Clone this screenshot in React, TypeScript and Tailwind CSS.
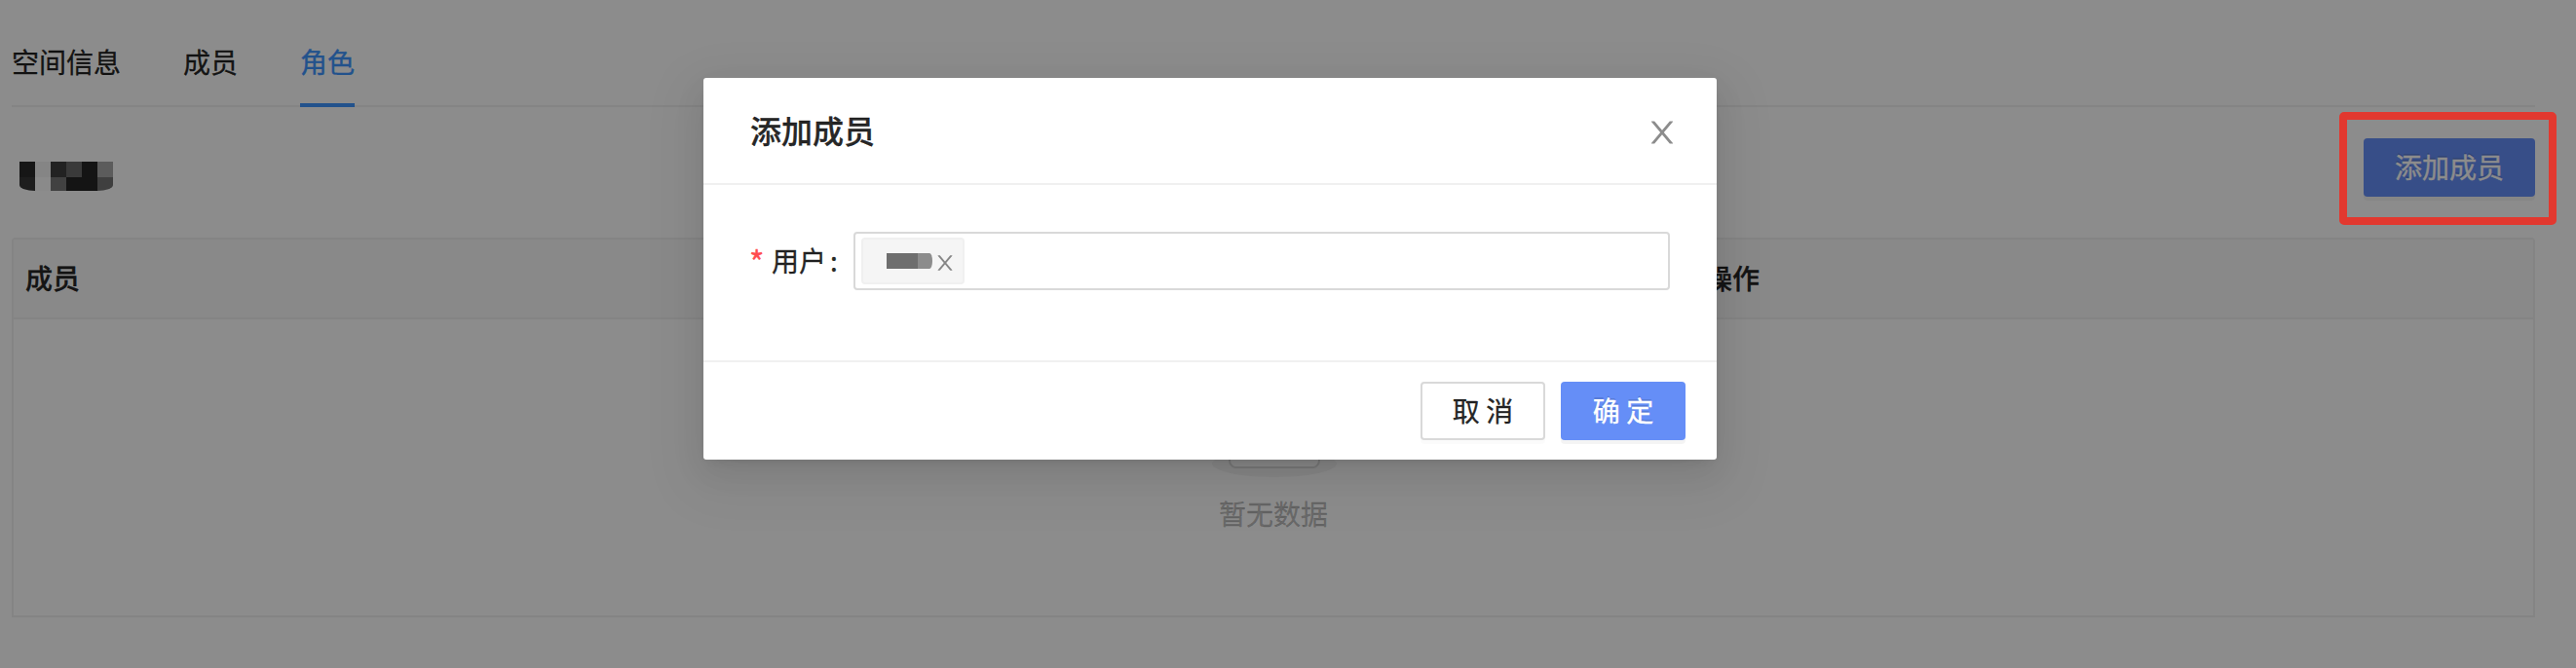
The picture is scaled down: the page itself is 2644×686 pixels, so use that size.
import React from "react";

function CloseIcon({ className }: { className: string }) {
  return (
    <svg viewBox="0 0 1024 1024" fill="currentColor" className={className} aria-hidden="true">
      <path d="M563.8 512l262.5-312.9c4.4-5.2.7-13.1-6.1-13.1h-79.8c-4.7 0-9.2 2.1-12.3 5.7L511.6 449.8 295.1 191.7c-3-3.6-7.5-5.7-12.3-5.7H203c-6.8 0-10.5 7.9-6.1 13.1L459.4 512 196.9 824.9A7.95 7.95 0 00203 838h79.8c4.7 0 9.2-2.1 12.3-5.7l216.5-258.1 216.5 258.1c3 3.6 7.5 5.7 12.3 5.7h79.8c6.8 0 10.5-7.9 6.1-13.1L563.8 512z" />
    </svg>
  );
}

function EmptyIcon() {
  return (
    <svg width="128" height="82" viewBox="0 0 64 41" className="block" aria-hidden="true">
      <g transform="translate(0 1)" fill="none" fillRule="evenodd">
        <ellipse fill="#F5F5F5" cx="32" cy="33" rx="32" ry="7" />
        <g fillRule="nonzero" stroke="#D9D9D9">
          <path d="M55 12.76L44.854 1.258C44.367.474 43.656 0 42.907 0H21.093c-.749 0-1.46.474-1.947 1.257L9 12.761V22h46v-9.24z" />
          <path
            d="M41.613 15.931c0-1.605.994-2.93 2.227-2.931H55v18.137C55 33.26 53.68 35 52.05 35h-40.1C10.32 35 9 33.259 9 31.137V13h11.16c1.233 0 2.227 1.323 2.227 2.928v.022c0 1.605 1.005 2.901 2.237 2.901h14.752c1.232 0 2.237-1.308 2.237-2.913v-.007z"
            fill="#FAFAFA"
          />
        </g>
      </g>
    </svg>
  );
}

function RedactedName() {
  return (
    <div className="mt-px grid h-[30px] w-24 grid-cols-6 grid-rows-[16px_14px]">
      <i className="bg-[#282828]" />
      <i className="bg-[#f2f2f2]" />
      <i className="bg-[#3e3e3e]" />
      <i className="bg-[#6a6a6a]" />
      <i className="bg-[#262626]" />
      <i className="bg-[#a8a8a8]" />
      <i className="bg-[#363636] [border-bottom-left-radius:16px_6px]" />
      <i className="bg-[#fbfbfb]" />
      <i className="bg-[#777777]" />
      <i className="bg-[#262626]" />
      <i className="bg-[#262626]" />
      <i className="bg-[#747474] [border-bottom-right-radius:16px_6px]" />
    </div>
  );
}

function MembersPage() {
  return (
    <div className="flex h-[686px] flex-col pl-3 pr-[42px]">
      <nav className="flex h-[110px] gap-16 border-b-2 border-[#f0f0f0] text-[28px] leading-[44px]">
        <span className="pt-[41px]">空间信息</span>
        <span className="pt-[41px]">成员</span>
        <span className="-mb-0.5 border-b-4 border-[#3e96ff] pt-[41px] text-[#3e96ff]">角色</span>
      </nav>
      <div className="flex h-[134px] items-start justify-between pt-8">
        <div className="pl-2 pt-[23px]">
          <RedactedName />
        </div>
        <button className="h-[60px] w-44 rounded-[4px] bg-[#658ef7] pb-0.5 text-[28px] leading-[58px] text-white shadow-[0_4px_0_rgba(0,0,0,0.045)] [text-shadow:0_-2px_0_rgba(0,0,0,0.12)]">
          添加成员
        </button>
      </div>
      <div className="flex h-[390px] flex-col rounded-t-[4px] border-2 border-[#f0f0f0]">
        <div className="flex h-[82px] items-center border-b-2 border-[#f0f0f0] bg-[#fafafa] pb-0.5 text-[28px] font-medium leading-[44px]">
          <div className="w-[1724px] pl-3">成员</div>
          <div className="pl-3">操作</div>
        </div>
        <div className="flex flex-col items-center pl-0.5 pt-20">
          <EmptyIcon />
          <p className="mr-0.5 mt-[15px] text-[28px] leading-[44px] text-black/25">暂无数据</p>
        </div>
      </div>
    </div>
  );
}

function AddMemberDialog() {
  return (
    <div
      role="dialog"
      className="flex h-[392px] w-[1040px] flex-col rounded-[3px] bg-white shadow-[0_6px_12px_-8px_rgba(0,0,0,0.12),0_12px_32px_0_rgba(0,0,0,0.08),0_18px_56px_16px_rgba(0,0,0,0.05)]"
    >
      <header className="flex h-[110px] items-start justify-between border-b-2 border-[#f0f0f0] pl-12 pr-[38px]">
        <h2 className="pt-[31px] text-[32px] font-medium leading-[44px]">添加成员</h2>
        <CloseIcon className="mt-[38px] size-9 text-black/45" />
      </header>
      <div className="flex h-[180px] items-start pl-12 pr-12 pt-12">
        <div className="flex h-[60px] w-[106px] items-center pb-0.5 text-[28px] leading-[44px]">
          <span className="-ml-px mt-0.5 w-[23px] text-[33px] text-[#ff4d4f]">*</span>
          <span>用户</span>
          <span className="ml-1">:</span>
        </div>
        <div className="flex h-[60px] flex-1 items-center rounded-[4px] border-2 border-[#d9d9d9] pl-1.5">
          <div className="flex h-12 w-[106px] items-center rounded-[4px] border-2 border-[#f0f0f0] bg-[#f5f5f5] pl-6">
            <div className="flex h-4 w-[47px]">
              <i className="w-8 bg-[#6e6e6e]" />
              <i className="flex-1 bg-[#8c8c8c] [border-bottom-right-radius:3px_8px] [border-top-right-radius:3px_8px]" />
            </div>
            <CloseIcon className="ml-px mt-1 size-6 text-black/45" />
          </div>
        </div>
      </div>
      <footer className="flex h-[102px] items-start justify-end gap-4 border-t-2 border-[#f0f0f0] pr-8 pt-5 text-[28px] [word-spacing:1.7px]">
        <button className="h-[60px] w-32 rounded-[4px] border-2 border-[#d9d9d9] bg-white pb-0.5 leading-[54px] shadow-[0_4px_0_rgba(0,0,0,0.015)]">
          取 消
        </button>
        <button className="h-[60px] w-32 rounded-[4px] bg-[#658ef7] pb-0.5 leading-[58px] text-white shadow-[0_4px_0_rgba(0,0,0,0.045)] [text-shadow:0_-2px_0_rgba(0,0,0,0.12)]">
          确 定
        </button>
      </footer>
    </div>
  );
}

export default function App() {
  return (
    <div className="relative h-[686px] w-[2644px] overflow-hidden bg-white font-['Noto_Sans_CJK_SC',sans-serif] text-black/85 [-webkit-text-stroke-width:0.35px]">
      <MembersPage />
      <div className="absolute inset-0 flex items-start bg-black/45 pl-[722px] pt-20">
        <AddMemberDialog />
      </div>
      <div className="absolute left-[2401px] top-[115px] h-[116px] w-[223px] rounded-[5px] border-8 border-[#e2382f]" />
    </div>
  );
}
